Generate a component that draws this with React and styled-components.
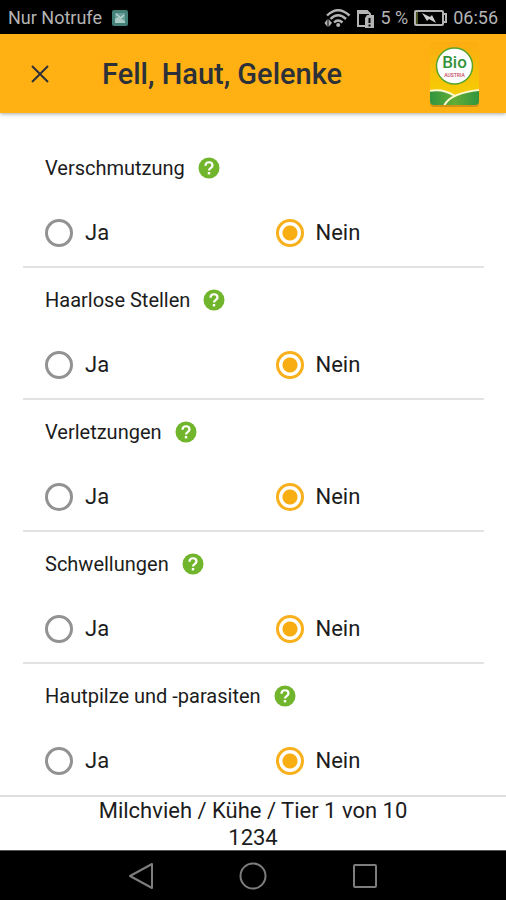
import React, { useState } from "react";
import styled, { createGlobalStyle } from "styled-components";

const GlobalStyle = createGlobalStyle`
  *, *::before, *::after { box-sizing: border-box; }
  body {
    margin: 0;
    background: #fff;
    color: #1c1c1c;
    font-family: Roboto, "Liberation Sans", sans-serif;
  }
`;

const Screen = styled.div`
  display: flex;
  flex-direction: column;
  min-height: 100vh;
`;

const StatusBar = styled.div`
  display: flex;
  align-items: center;
  justify-content: space-between;
  height: 34px;
  padding: 2px 8px 0;
  background: #000;
  color: #b4b4b4;
  font-size: 18px;
  line-height: 24px;
`;

const StatusGroup = styled.div`
  display: flex;
  align-items: center;
  gap: ${(p) => p.$gap}px;
  svg { display: block; }
`;

const Header = styled.header`
  display: flex;
  align-items: center;
  height: 79px;
  padding: 0 26px 0 24px;
  background: #ffb114;
  box-shadow: 0 1px 4px rgba(0, 0, 0, 0.35);
`;

const CloseButton = styled.button`
  display: flex;
  align-items: center;
  justify-content: center;
  width: 32px;
  height: 32px;
  padding: 0;
  border: 0;
  background: none;
  color: #2c3038;
`;

const Title = styled.h1`
  flex: 1;
  margin: 0 0 0 46px;
  color: #2c3038;
  font-size: 29px;
  font-weight: 500;
  line-height: 32px;
`;

const Logo = styled.svg`
  display: block;
  flex: none;
  width: 51px;
  height: 66px;
`;

const Questions = styled.main`
  flex: 1;
  padding: 23px 22px 0 23px;
`;

const Question = styled.fieldset`
  display: grid;
  grid-template-columns: 1fr 1fr;
  row-gap: 39px;
  align-content: start;
  min-width: 0;
  height: 132px;
  margin: 0;
  padding: 20px 0 0;
  border: 0;
  border-bottom: 2px solid #e2e2e2;

  &:last-child {
    height: 131px;
    border-bottom: 0;
  }
`;

const QuestionHead = styled.div`
  grid-column: 1 / -1;
  display: flex;
  align-items: center;
  gap: 13px;
  height: 24px;
  padding-left: 22px;
  font-size: 20px;
  line-height: 24px;
`;

const HelpButton = styled.button`
  display: block;
  width: 22px;
  height: 22px;
  padding: 0;
  border: 0;
  border-radius: 50%;
  background: none;
  svg { display: block; }
`;

const Option = styled.label`
  display: flex;
  align-items: center;
  gap: 12px;
  height: 28px;
  padding-left: 22px;
  font-size: 22px;
  line-height: 28px;
`;

const Radio = styled.input`
  appearance: none;
  flex: none;
  width: 28px;
  height: 28px;
  margin: 0;
  border: 3px solid #929292;
  border-radius: 50%;
  background: #fff;

  &:checked {
    border-color: #f8b01c;
    background: radial-gradient(circle, #f8ae12 0 7px, #fff 8px);
  }
`;

const Footer = styled.footer`
  border-top: 2px solid #dedede;
  height: 55px;
  background: #fff;
  font-size: 22px;
  line-height: 27px;
  text-align: center;
`;

const NavBar = styled.nav`
  display: grid;
  grid-template-columns: repeat(3, 112px);
  justify-content: center;
  height: 50px;
  background: #000;
  border-top: 1px solid #555;
`;

const NavButton = styled.button`
  display: flex;
  align-items: center;
  justify-content: center;
  padding: 0;
  border: 0;
  background: none;
`;

const PictureIcon = () => (
  <svg width="16" height="16" viewBox="0 0 16 16" aria-hidden="true">
    <rect width="16" height="16" rx="2" fill="#438078" />
    <rect x="3" y="3" width="10" height="10" fill="#6a9f98" />
    <path d="M3 13V9l3-2 3 2 4 2v2z" fill="#a9c9c4" />
    <path d="M4 4l5 4 3-3" stroke="#b9d3cf" strokeWidth="1.5" fill="none" />
  </svg>
);

const WifiIcon = () => (
  <svg width="27" height="20" viewBox="0 0 27 20" fill="none" stroke="#b4b4b4" strokeWidth="2.4" aria-hidden="true">
    <path d="M3 7.500Q14 -3 25.500 7.500M6.500 11Q14 3.500 22 11M10 14.500Q14 10.500 18.500 14.500" />
    <circle cx="14.200" cy="17" r="2" fill="#b4b4b4" stroke="none" />
    <path d="M0.500 15L3.500 11v8zM4.500 11l3.500 4-3.500 4z" fill="#b4b4b4" stroke="none" />
  </svg>
);

const SimIcon = () => (
  <svg width="17" height="19" viewBox="0 0 17 19" fill="none" aria-hidden="true">
    <path d="M8 17H1V2h9l3 3v2" stroke="#b4b4b4" strokeWidth="2" />
    <path d="M1 1h9l3 4H1z" fill="#b4b4b4" />
    <path d="M10 6h7v13H8V9z" fill="#b4b4b4" />
    <path d="M12.5 9v5M12.5 15.5v2" stroke="#000" strokeWidth="2" />
  </svg>
);

const BatteryIcon = () => (
  <svg width="33" height="16" viewBox="0 0 33 16" fill="none" aria-hidden="true">
    <rect x="1" y="1" width="28" height="14" rx="1" stroke="#b4b4b4" strokeWidth="2" />
    <path d="M30 4h2v8h-2" stroke="#b4b4b4" strokeWidth="2" />
    <path d="M3 2v12" stroke="#66702e" strokeWidth="1.5" />
    <path d="M8 3l8 4 2-2 4 8-7-4-2 2z" fill="#d0d0d0" />
  </svg>
);

const HelpIcon = () => (
  <svg width="22" height="22" viewBox="0 0 22 22" fill="none" aria-hidden="true">
    <circle cx="11" cy="11" r="10.5" fill="#70b52c" />
    <path d="M7.5 8.7C7.500 4 14.500 4.200 14.500 8.500C14.500 10.800 11 10.800 11 13.500" stroke="#fff" strokeWidth="2.2" />
    <path d="M11 15v2.400" stroke="#fff" strokeWidth="2.4" />
  </svg>
);

const BioLogo = () => (
  <Logo viewBox="0 0 51 66" role="img" aria-label="Bio Austria">
    <defs>
      <clipPath id="card"><rect x="1" y="1" width="49" height="63" rx="4" /></clipPath>
      <linearGradient id="sky" x1="0" y1="0" x2="0" y2="1">
        <stop offset="0" stopColor="#fcab12" />
        <stop offset="0.75" stopColor="#f5cb05" />
      </linearGradient>
      <linearGradient id="meadow" x1="0" y1="0" x2="1" y2="0">
        <stop offset="0" stopColor="#2f9440" />
        <stop offset="0.5" stopColor="#62ad35" />
        <stop offset="1" stopColor="#2f9440" />
      </linearGradient>
    </defs>
    <rect x="1" y="3" width="49" height="63" rx="4" fill="#bd8515" opacity="0.7" />
    <g clipPath="url(#card)">
      <rect width="51" height="66" fill="url(#sky)" />
      <path d="M0 50Q14 47 27 55Q37 50 51 49V66H0z" fill="url(#meadow)" />
      <path d="M0 50Q14 47 26 55" fill="none" stroke="#fff8d0" strokeWidth="2" />
      <path d="M51 49Q21 52 15 65" fill="none" stroke="#fff8d0" strokeWidth="2" />
    </g>
    <circle cx="25.5" cy="25" r="18" fill="#fff" stroke="#56a52e" strokeWidth="1.5" />
    <text x="25.5" y="27" textAnchor="middle" fontFamily="Roboto, sans-serif" fontSize="17" fontWeight="500" fill="#349339">Bio</text>
    <text x="25.5" y="36" textAnchor="middle" fontFamily="Roboto, sans-serif" fontSize="5" fontWeight="500" fill="#c53f5b">AUSTRIA</text>
  </Logo>
);

const questions = [
  "Verschmutzung",
  "Haarlose Stellen",
  "Verletzungen",
  "Schwellungen",
  "Hautpilze und -parasiten",
];

function QuestionRow({ text, name }) {
  const [answer, setAnswer] = useState("Nein");
  return (
    <Question aria-labelledby={`${name}-label`}>
      <QuestionHead>
        <span id={`${name}-label`}>{text}</span>
        <HelpButton type="button" aria-label={`Hilfe: ${text}`}><HelpIcon /></HelpButton>
      </QuestionHead>
      {["Ja", "Nein"].map((value) => (
        <Option key={value}>
          <Radio type="radio" name={name} value={value} checked={answer === value} onChange={() => setAnswer(value)} />
          {value}
        </Option>
      ))}
    </Question>
  );
}

export default function App() {
  return (
    <>
      <GlobalStyle />
      <Screen>
        <StatusBar>
          <StatusGroup $gap={10}><span>Nur Notrufe</span><PictureIcon /></StatusGroup>
          <StatusGroup $gap={6}>
            <WifiIcon /><SimIcon /><span>5 %</span><BatteryIcon /><span>06:56</span>
          </StatusGroup>
        </StatusBar>
        <Header>
          <CloseButton type="button" aria-label="Schließen">
            <svg width="18" height="18" viewBox="0 0 18 18" fill="none" stroke="currentColor" strokeWidth="2" aria-hidden="true">
              <path d="M1 1l16 16M17 1L1 17" />
            </svg>
          </CloseButton>
          <Title>Fell, Haut, Gelenke</Title>
          <BioLogo />
        </Header>
        <Questions>
          {questions.map((text, i) => <QuestionRow key={text} text={text} name={`frage-${i}`} />)}
        </Questions>
        <Footer>
          <div>Milchvieh / Kühe / Tier 1 von 10</div>
          <div>1234</div>
        </Footer>
        <NavBar aria-label="System">
          <NavButton type="button" aria-label="Zurück">
            <svg width="26" height="28" viewBox="0 0 26 28" fill="none" stroke="#7d7d7d" strokeWidth="2"><path d="M24 2v24L2 14z" strokeLinejoin="round" /></svg>
          </NavButton>
          <NavButton type="button" aria-label="Startbildschirm">
            <svg width="28" height="28" viewBox="0 0 28 28" fill="none" stroke="#7d7d7d" strokeWidth="2"><circle cx="14" cy="14" r="12.5" /></svg>
          </NavButton>
          <NavButton type="button" aria-label="Übersicht">
            <svg width="26" height="26" viewBox="0 0 26 26" fill="none" stroke="#7d7d7d" strokeWidth="2"><rect x="2" y="2" width="22" height="22" rx="1" /></svg>
          </NavButton>
        </NavBar>
      </Screen>
    </>
  );
}
